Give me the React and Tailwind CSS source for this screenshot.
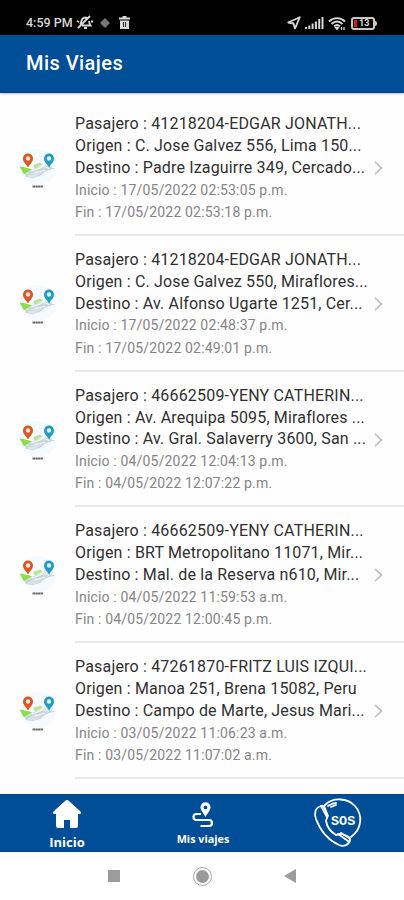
const viajes = [
  {
    pasajero: "41218204-EDGAR JONATH...",
    origen: "C. Jose Galvez 556, Lima 150...",
    destino: "Padre Izaguirre 349, Cercado...",
    inicio: "17/05/2022 02:53:05 p.m.",
    fin: "17/05/2022 02:53:18 p.m.",
  },
  {
    pasajero: "41218204-EDGAR JONATH...",
    origen: "C. Jose Galvez 550, Miraflores...",
    destino: "Av. Alfonso Ugarte 1251, Cer...",
    inicio: "17/05/2022 02:48:37 p.m.",
    fin: "17/05/2022 02:49:01 p.m.",
  },
  {
    pasajero: "46662509-YENY CATHERIN...",
    origen: "Av. Arequipa 5095, Miraflores ...",
    destino: "Av. Gral. Salaverry 3600, San ...",
    inicio: "04/05/2022 12:04:13 p.m.",
    fin: "04/05/2022 12:07:22 p.m.",
  },
  {
    pasajero: "46662509-YENY CATHERIN...",
    origen: "BRT Metropolitano 11071, Mir...",
    destino: "Mal. de la Reserva n610, Mir...",
    inicio: "04/05/2022 11:59:53 a.m.",
    fin: "04/05/2022 12:00:45 p.m.",
  },
  {
    pasajero: "47261870-FRITZ LUIS IZQUI...",
    origen: "Manoa 251, Brena 15082, Peru",
    destino: "Campo de Marte, Jesus Mari...",
    inicio: "03/05/2022 11:06:23 a.m.",
    fin: "03/05/2022 11:07:02 a.m.",
  },
];

function StatusBar() {
  return (
    <div className="flex h-[35px] shrink-0 items-end justify-between bg-black pr-[27px] pb-[5px] pl-[26px] text-[#d8d8d8]">
      <div className="flex items-center">
        <span className="w-[49px] text-[12.5px] leading-[14px] font-medium whitespace-nowrap">4:59 PM</span>
        {/* silenciado */}
        <svg className="ml-[1px] h-[15px] w-[18px]" viewBox="0 0 18 15" fill="none" stroke="currentColor" strokeWidth="1.8">
          <path d="M4 9.5C5.5 8 5 3 9 2.5c1.500 0 2.500.8 3 1.500M13 6c.3 2 .5 3 1.500 4.500H6M8 13h3M2 13 14 1M1 6l2 1M15 6.500h2" />
        </svg>
        <svg className="ml-[6px] h-[10px] w-[10px] text-[#777]" viewBox="0 0 12 12" fill="currentColor">
          <path d="M6 0l3 3 3 3-3 3-3 3-3-3-3-3 3-3z" />
        </svg>
        <svg className="ml-[9px] h-[13px] w-[11px]" viewBox="0 0 11 13" fill="currentColor">
          <path fillRule="evenodd" d="M0 1.500h3.500V0h4v1.500H11v2H0zM1 4.500h9V13H1zM4 6v5h.8V6zm2.200 0v5H7V6z" />
        </svg>
      </div>
      <div className="flex items-center">
        <svg className="h-[14px] w-[14px]" viewBox="0 0 14 14" fill="none" stroke="currentColor" strokeWidth="1.800" strokeLinejoin="round">
          <path d="M12.800 1.200 1.200 6.500l5.300 1 1.500 5z" />
        </svg>
        <svg className="ml-[4px] h-[12px] w-[19px]" viewBox="0 0 19 12" fill="currentColor">
          <path d="M0 10h2v2H0zM3.300 8.500h2V12h-2zM6.600 6.500h2V12h-2zM9.900 4.500h2V12h-2zM13.200 2h2v10h-2zM16.500 0h2v12h-2z" />
        </svg>
        <svg className="ml-[4px] h-[13px] w-[18px]" viewBox="0 0 18 13" fill="none" stroke="currentColor" strokeWidth="1.900">
          <path d="M1 4.500C5.500 0 12.500 0 17 4.500M3.500 7c3.500-3.200 7.500-3.200 11 0M6 9.300c2-1.700 4-1.700 6 0" />
          <path d="M7.500 10.500 9 12.500l1.500-2zM13.500 10v3M16 10v3" strokeWidth="1.300" />
        </svg>
        <div className="ml-[5px] flex items-center">
          <div className="flex h-[13px] w-[24px] items-center rounded-[3px] border-2 border-[#c8c8c8] pl-px">
            <span className="h-[7px] w-[3px] bg-[#e01818]"></span>
            <span className="ml-[2px] text-[9px] leading-[9px] font-bold">13</span>
          </div>
          <span className="h-[5px] w-[2px] rounded-r-sm bg-[#c8c8c8]"></span>
        </div>
      </div>
    </div>
  );
}

function MapaIcon() {
  return (
    <svg className="h-[44px] w-[40px]" viewBox="0 0 40 44">
      <circle cx="20" cy="19" r="18" fill="#f4fafd" />
      <path d="M1.500 18.500 10 20l4 1.500-8 5z" fill="#8fdc4b" />
      <path d="m15 17 7-2.500 3 2-8 4.500z" fill="#b9e59a" />
      <path d="m7 26 8-4.500 12-4 10 3-9 2.500-6 5-8 2-6-1z" fill="#c9d6dd" />
      <path d="m9 28 9-5 6 2-9 5.500z" fill="#d7e1e6" />
      <path d="m14 23 12-4.500 5 2M17 25l10-3" fill="none" stroke="#f5f9fb" />
      <path d="M10 19.500C8 16 5 14 5 10.500a5 5 0 0 1 10 0C15 14 12 16 10 19.500z" fill="#dc5525" />
      <circle cx="10" cy="10.500" r="2.200" fill="#fbe9e0" />
      <path d="M31 19.500c-2-3.500-5-5.500-5-9a5 5 0 0 1 10 0C36 14 33 16 31 19.500z" fill="#239bc1" />
      <circle cx="31" cy="10.500" r="2.200" fill="#dff3f8" />
      <path d="M14.500 38.500h10.500" stroke="#6b6b6b" strokeWidth="1.800" strokeDasharray="2.500 .3" />
    </svg>
  );
}

function Viaje({ viaje }) {
  return (
    <li className="flex h-[135.700px] shrink-0">
      <div className="w-[75px] shrink-0 pt-[48px] pl-[18px]">
        <MapaIcon />
      </div>
      <div className="flex min-w-0 flex-1 border-b-2 border-[#e9e9e9] pt-[13px]">
        <div className="w-[295px] shrink-0 whitespace-nowrap">
          <p className="text-[16px] leading-[21.800px] tracking-[0.180px] text-[#303030]">Pasajero : {viaje.pasajero}</p>
          <p className="text-[16px] leading-[21.800px] tracking-[0.160px] text-[#303030]">Origen : {viaje.origen}</p>
          <p className="text-[16px] leading-[21.800px] tracking-[0.160px] text-[#303030]">Destino : {viaje.destino}</p>
          <p className="text-[14px] leading-[22.300px] tracking-[0.170px] text-[#858585]">Inicio : {viaje.inicio}</p>
          <p className="text-[14px] leading-[22.300px] tracking-[0.170px] text-[#858585]">Fin : {viaje.fin}</p>
        </div>
        <svg className="mt-[48px] ml-[4px] h-[14px] w-[9px] text-[#bcbcbc]" viewBox="0 0 9 14" fill="none" stroke="currentColor" strokeWidth="1.600">
          <path d="m1 1 6.500 6L1 13" />
        </svg>
      </div>
    </li>
  );
}

function TabBar() {
  return (
    <nav className="grid h-[58px] shrink-0 grid-cols-[134px_138px_132px] border-y border-[#083f91] bg-[#004d98] font-['Open_Sans',sans-serif] font-bold text-white">
      <div className="flex flex-col items-center pt-[4px]">
        <svg className="h-[30px] w-[30px]" viewBox="0 0 30 30" fill="currentColor">
          <path d="M15 1Q16 1 17 2l11.500 10.500q1.500 1.500-.5 2.500h-2v12q0 2-2 2h-6v-8h-6v8H6q-2 0-2-2V15H2q-2-1-.5-2.500L13 2q1-1 2-1z" />
        </svg>
        <span className="mt-[4px] text-[13px] leading-[18px]">Inicio</span>
      </div>
      <div className="flex flex-col items-center pt-[7px]">
        <svg className="h-[26px] w-[22px]" viewBox="0 0 22 26" fill="none" stroke="currentColor" strokeWidth="2.200">
          <path fill="currentColor" fillRule="evenodd" stroke="none" d="M13.500 15C11.500 11 8.500 8.500 8.500 5.200a5 5 0 0 1 10 0C18.500 8.500 15.500 11 13.500 15zm0-11.500a1.900 1.900 0 1 0 0 3.800 1.900 1.900 0 0 0 0-3.800z" />
          <path d="M9 12H4.500a3 3 0 0 0 0 6H17a3 3 0 0 1 0 6H8.500" />
        </svg>
        <span className="mt-[2px] text-[10.800px] leading-[18px]">Mis viajes</span>
      </div>
      <div className="flex items-start pt-[3px] pl-[41px]">
        <svg className="h-[50px] w-[50px]" viewBox="0 0 50 50" fill="none" stroke="currentColor" strokeWidth="1.800" strokeLinecap="round" strokeLinejoin="round">
          <path d="M8 8C2 10 1 15 3 21c4 11 12 21 23 26 5 2 10 0 11-5 .5-2-1-3-3-4l-5-2c-2-1-4 1-6 1-5-3-9-8-10-14 0-2 2-3 1-5l-2-7c-1-2-2-4-4-3z" />
          <path d="M12 7C20-1 35 0 42 8c8 9 7 23-4 31M8 8l6 11M11 8l4 10M25 36l10 7M28 35l8 5M15 8c3-2 5-3 8-3M18 9l5-2" />
          <text x="18" y="27" fill="currentColor" stroke="none" fontFamily="'Liberation Mono', monospace" fontWeight="700" fontSize="13.500">SOS</text>
        </svg>
      </div>
    </nav>
  );
}

function AndroidNav() {
  return (
    <div className="flex h-[48px] shrink-0 items-center bg-white pl-[108px] text-[#9b9b9b]">
      <span className="h-[12px] w-[12px] bg-[#9b9b9b]"></span>
      <span className="ml-[73px] flex h-[19px] w-[19px] items-center justify-center rounded-full border border-[#a5a5a5]">
        <span className="h-[13px] w-[13px] rounded-full bg-[#9b9b9b]"></span>
      </span>
      <svg className="ml-[72px] h-[14px] w-[12px]" viewBox="0 0 12 14" fill="currentColor">
        <path d="M12 0v14L0 7z" />
      </svg>
    </div>
  );
}

function App() {
  return (
    <div className="flex h-[900px] w-[404px] flex-col overflow-hidden bg-[#fefefe] font-[Roboto,sans-serif]">
      <StatusBar />
      <header className="flex h-[58px] shrink-0 items-center border-b border-[#083f91] bg-[#004d98] pb-[2px] pl-[26px] shadow-[0_1px_2px_rgba(0,0,0,0.25)]">
        <h1 className="text-[20px] font-medium tracking-[0.450px] text-white">Mis Viajes</h1>
      </header>
      <ul className="flex min-h-0 flex-1 flex-col overflow-hidden pt-[7.400px]">
        {viajes.map((viaje, i) => (
          <Viaje key={i} viaje={viaje} />
        ))}
      </ul>
      <TabBar />
      <AndroidNav />
    </div>
  );
}

export default App;
